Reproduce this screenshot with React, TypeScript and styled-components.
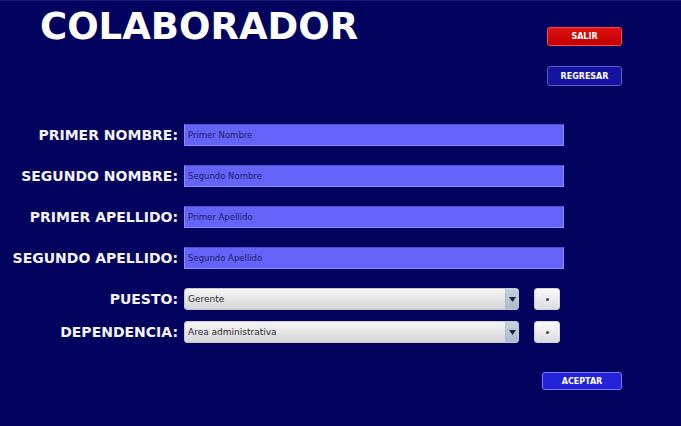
import React from "react";
import styled, { createGlobalStyle, css } from "styled-components";

const Global = createGlobalStyle`
  html, body { margin: 0; padding: 0; background: #02025f; }
  * { box-sizing: border-box; }
`;

const Page = styled.div`
  width: 681px;
  height: 426px;
  background: #02025f;
  border-top: 1px solid #1a1a78;
  font-family: "DejaVu Sans", Verdana, sans-serif;
  display: flex;
  flex-direction: column;
  overflow: hidden;
`;

const Header = styled.div`
  display: flex;
  justify-content: space-between;
  align-items: flex-start;
  height: 85px;
`;

const Title = styled.h1`
  margin: 7px 0 0 40px;
  font-size: 37px;
  line-height: 37px;
  font-weight: bold;
  color: #ffffff;
  letter-spacing: 0;
`;

const ButtonStack = styled.div`
  display: flex;
  flex-direction: column;
  align-items: flex-end;
  gap: 20px;
  padding-top: 26px;
  margin-right: 59px;
`;

type Variant = "red" | "blue" | "accept";

const ActionButton = styled.button<{ $variant: Variant; $w: number; $h: number }>`
  width: ${(p) => p.$w}px;
  height: ${(p) => p.$h}px;
  padding: 0;
  border-radius: 3px;
  font-family: "DejaVu Sans", Verdana, sans-serif;
  font-size: 8px;
  font-weight: bold;
  color: #ffffff;
  display: flex;
  align-items: center;
  justify-content: center;
  ${(p) =>
    p.$variant === "red"
      ? css`
          background: linear-gradient(#e01010, #c00000);
          border: 1px solid #ff4a4a;
        `
      : p.$variant === "blue"
      ? css`
          background: #1414a0;
          border: 1px solid #5a5ad0;
        `
      : css`
          background: #2222d8;
          border: 1px solid #7a7aff;
        `}
`;

const Form = styled.div`
  display: flex;
  flex-direction: column;
  margin-top: 38px;
`;

const Section = styled.div<{ $gap: number; $top?: number }>`
  display: flex;
  flex-direction: column;
  gap: ${(p) => p.$gap}px;
  margin-top: ${(p) => p.$top ?? 0}px;
`;

const Row = styled.div`
  display: flex;
  align-items: center;
  gap: 6px;
`;

const Label = styled.label`
  width: 178px;
  text-align: right;
  font-size: 14px;
  font-weight: bold;
  color: #f4f4f8;
  white-space: nowrap;
`;

const TextInput = styled.input`
  width: 380px;
  height: 22px;
  background: #6464fa;
  border: 1px solid #8c8cff;
  border-top-color: #5050c8;
  padding: 0 3px;
  font-family: "DejaVu Sans", Verdana, sans-serif;
  font-size: 8.5px;
  color: #1c1c6a;
  outline: none;
  &::placeholder { color: #1c1c6a; }
`;

const SelectBox = styled.div`
  width: 335px;
  height: 22px;
  display: flex;
  border-radius: 3px;
  overflow: hidden;
  background: linear-gradient(#f6f6f6, #e2e2e4 60%, #d6d6da);
  border: 1px solid #c8c8cc;
`;

const SelectText = styled.span`
  flex: 1;
  padding-left: 3px;
  display: flex;
  align-items: center;
  font-size: 9px;
  color: #2a2a30;
`;

const SelectArrow = styled.span`
  width: 13px;
  display: flex;
  align-items: center;
  justify-content: center;
  background: linear-gradient(#c4d2de, #a8bccc);
  border-left: 1px solid #b0bcc8;
`;

const PlusButton = styled.button`
  width: 26px;
  height: 22px;
  margin-left: 9px;
  padding: 0;
  border-radius: 3px;
  border: 1px solid #d4d4d8;
  background: linear-gradient(#fafafa, #dcdce0);
  display: flex;
  align-items: center;
  justify-content: center;
`;

const Dot = styled.span`
  width: 3px;
  height: 3px;
  border-radius: 50%;
  background: #4a4250;
`;

const Footer = styled.div`
  display: flex;
  justify-content: flex-end;
  margin-top: 29px;
  margin-right: 59px;
`;

const textFields = [
  ["PRIMER NOMBRE:", "Primer Nombre"],
  ["SEGUNDO NOMBRE:", "Segundo Nombre"],
  ["PRIMER APELLIDO:", "Primer Apellido"],
  ["SEGUNDO APELLIDO:", "Segundo Apellido"],
];

const selects = [
  ["PUESTO:", "Gerente"],
  ["DEPENDENCIA:", "Area administrativa"],
];

export default function App() {
  return (
    <>
      <Global />
      <Page>
        <Header>
          <Title>COLABORADOR</Title>
          <ButtonStack>
            <ActionButton $variant="red" $w={75} $h={19}>SALIR</ActionButton>
            <ActionButton $variant="blue" $w={75} $h={20}>REGRESAR</ActionButton>
          </ButtonStack>
        </Header>
        <Form>
          <Section $gap={19}>
            {textFields.map(([l, p]) => (
              <Row key={l}>
                <Label>{l}</Label>
                <TextInput placeholder={p} />
              </Row>
            ))}
          </Section>
          <Section $gap={11} $top={19}>
            {selects.map(([l, v]) => (
              <Row key={l}>
                <Label>{l}</Label>
                <SelectBox>
                  <SelectText>{v}</SelectText>
                  <SelectArrow>
                    <svg width="7" height="5" viewBox="0 0 7 5">
                      <path d="M0 0 L7 0 L3.5 5 Z" fill="#1e2430" />
                    </svg>
                  </SelectArrow>
                </SelectBox>
                <PlusButton>
                  <Dot />
                </PlusButton>
              </Row>
            ))}
          </Section>
        </Form>
        <Footer>
          <ActionButton $variant="accept" $w={80} $h={18}>ACEPTAR</ActionButton>
        </Footer>
      </Page>
    </>
  );
}
